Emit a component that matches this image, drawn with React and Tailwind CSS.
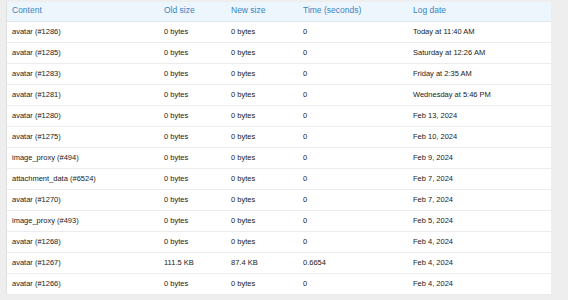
import React from "react";

const rows = [
  ["avatar (#1286)", "0 bytes", "0 bytes", "0", "Today at 11:40 AM"],
  ["avatar (#1285)", "0 bytes", "0 bytes", "0", "Saturday at 12:26 AM"],
  ["avatar (#1283)", "0 bytes", "0 bytes", "0", "Friday at 2:35 AM"],
  ["avatar (#1281)", "0 bytes", "0 bytes", "0", "Wednesday at 5:46 PM"],
  ["avatar (#1280)", "0 bytes", "0 bytes", "0", "Feb 13, 2024"],
  ["avatar (#1275)", "0 bytes", "0 bytes", "0", "Feb 10, 2024"],
  ["image_proxy (#494)", "0 bytes", "0 bytes", "0", "Feb 9, 2024"],
  ["attachment_data (#6524)", "0 bytes", "0 bytes", "0", "Feb 7, 2024"],
  ["avatar (#1270)", "0 bytes", "0 bytes", "0", "Feb 7, 2024"],
  ["image_proxy (#493)", "0 bytes", "0 bytes", "0", "Feb 5, 2024"],
  ["avatar (#1268)", "0 bytes", "0 bytes", "0", "Feb 4, 2024"],
  ["avatar (#1267)", "111.5 KB", "87.4 KB", "0.6654", "Feb 4, 2024"],
  ["avatar (#1266)", "0 bytes", "0 bytes", "0", "Feb 4, 2024"],
];

// column widths taken from the header text positions
const cols = "grid grid-cols-[152px_67px_72px_110px_1fr]";

export default function App() {
  return (
    <div className="w-[568px] h-[300px] overflow-hidden bg-[#eeeeee] pt-[2px] pl-[6px] pr-[17px]" style={{ fontFamily: '"Liberation Sans", Arial, sans-serif' }}>
      <div className="bg-white border-l border-[#e0e0e0]">
        <div className={`${cols} h-[20px] items-center pb-[3px] bg-[#edf6fd] border-b border-[#dfe8f0] text-[8.5px] text-[#3a83c2] px-[5px]`}>
          <span>Content</span>
          <span>Old size</span>
          <span>New size</span>
          <span>Time (seconds)</span>
          <span>Log date</span>
        </div>
        {rows.map((r, i) => (
          <div key={i} className={`${cols} h-[21px] items-center border-b border-[#ececec] text-[7.5px] text-[#1a1a1a] px-[5px]`}>
            {r.map((c, j) => (
              <span key={j}>{c}</span>
            ))}
          </div>
        ))}
      </div>
    </div>
  );
}
